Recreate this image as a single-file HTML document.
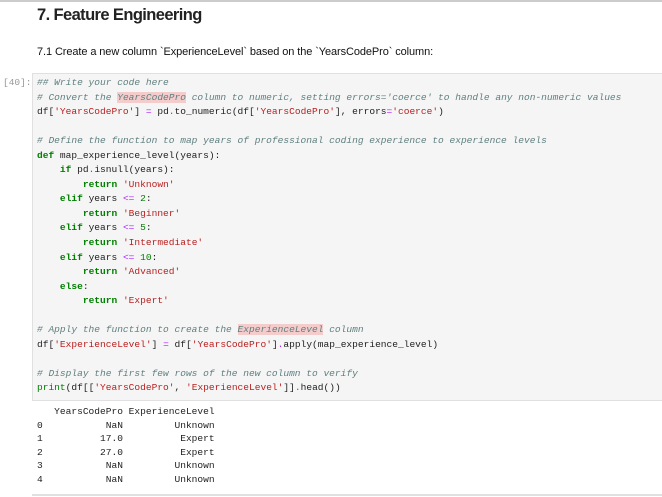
<!DOCTYPE html>
<html><head><style>
body{margin:0;width:662px;height:497px;background:#fff;overflow:hidden;font-family:"Liberation Sans",sans-serif;position:relative}
.top{position:absolute;left:0;top:0;width:662px;height:2px;background:#ccc}
h1{position:absolute;left:37px;top:6px;margin:0;font-size:16.5px;font-weight:bold;color:#222;letter-spacing:-0.6px}
.sub{position:absolute;left:37px;top:46px;font-size:11px;color:#111;letter-spacing:-0.1px}
.pr{position:absolute;left:3px;top:77px;font:9.5px "Liberation Mono",monospace;color:#999}
.box{position:absolute;left:32px;top:73px;width:640px;height:328px;background:#f5f5f5;border:1px solid #e0e0e0;box-sizing:border-box}
pre{margin:0;position:absolute;font:9.55px/14.55px "Liberation Mono",monospace;color:#222;white-space:pre}
.code{left:37px;top:76px}
.out{left:37px;top:405px;line-height:13.6px}
.c{color:#5f7f7f;font-style:italic}
.k{color:#008000;font-weight:bold}
.s{color:#ba2121}
.o{color:#aa22ff}
.n{color:#008000}
.b{color:#008000}
.hl{background:#f5cccc}
.bot{position:absolute;left:32px;top:494px;width:640px;height:2px;background:#e0e0e0}
</style></head><body>
<div class="top"></div>
<h1>7. Feature Engineering</h1>
<div class="sub">7.1 Create a new column `ExperienceLevel` based on the `YearsCodePro` column:</div>
<div class="pr">[40]:</div>
<div class="box"></div>
<pre class="code"><span class="c">## Write your code here</span>
<span class="c"># Convert the <span class="hl">YearsCodePro</span> column to numeric, setting errors='coerce' to handle any non-numeric values</span>
df[<span class="s">'YearsCodePro'</span>] <span class="o">=</span> pd<span class="o">.</span>to_numeric(df[<span class="s">'YearsCodePro'</span>], errors<span class="o">=</span><span class="s">'coerce'</span>)

<span class="c"># Define the function to map years of professional coding experience to experience levels</span>
<span class="k">def</span> map_experience_level(years):
    <span class="k">if</span> pd<span class="o">.</span>isnull(years):
        <span class="k">return</span> <span class="s">'Unknown'</span>
    <span class="k">elif</span> years <span class="o">&lt;=</span> <span class="n">2</span>:
        <span class="k">return</span> <span class="s">'Beginner'</span>
    <span class="k">elif</span> years <span class="o">&lt;=</span> <span class="n">5</span>:
        <span class="k">return</span> <span class="s">'Intermediate'</span>
    <span class="k">elif</span> years <span class="o">&lt;=</span> <span class="n">10</span>:
        <span class="k">return</span> <span class="s">'Advanced'</span>
    <span class="k">else</span>:
        <span class="k">return</span> <span class="s">'Expert'</span>

<span class="c"># Apply the function to create the <span class="hl">ExperienceLevel</span> column</span>
df[<span class="s">'ExperienceLevel'</span>] <span class="o">=</span> df[<span class="s">'YearsCodePro'</span>]<span class="o">.</span>apply(map_experience_level)

<span class="c"># Display the first few rows of the new column to verify</span>
<span class="b">print</span>(df[[<span class="s">'YearsCodePro'</span>, <span class="s">'ExperienceLevel'</span>]]<span class="o">.</span>head())</pre>
<pre class="out">   YearsCodePro ExperienceLevel
0           NaN         Unknown
1          17.0          Expert
2          27.0          Expert
3           NaN         Unknown
4           NaN         Unknown</pre>
<div class="bot"></div>
</body></html>
